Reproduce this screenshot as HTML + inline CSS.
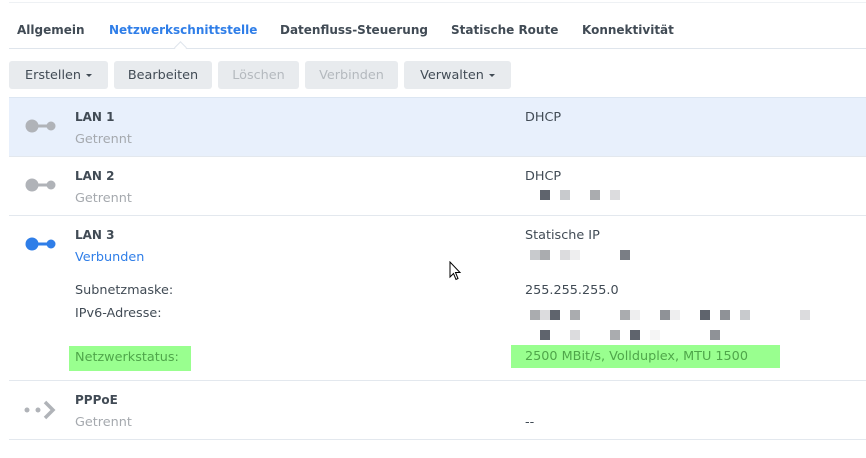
<!DOCTYPE html>
<html><head><style>
body{margin:0;width:866px;height:458px;background:#fff;position:relative;overflow:hidden;font-family:"DejaVu Sans","Liberation Sans",sans-serif;font-size:12.8px;color:#414b55}
.a{position:absolute;white-space:nowrap;margin-top:1px}
.b{font-weight:bold;font-size:12px}
.t{position:absolute;top:23px;font-weight:bold;font-size:12px;color:#414b55}
.btn{position:absolute;top:61px;height:28px;line-height:29px;background:#e8ebee;border-radius:3px;text-align:center;font-size:12.8px;color:#414b55}
.dis{color:#b4b9be}
.hl{position:absolute;left:9px;right:0;border-top:1px solid #e3e8ee}
.g{color:#a5a9ae}
.s{position:absolute;width:10px;height:10px}
.car{display:inline-block;border-left:3px solid transparent;border-right:3px solid transparent;border-top:3px solid #414b55;vertical-align:middle;margin-left:5px}
svg.a,.s,.box{margin-top:0}
</style></head><body>
<div class="hl" style="top:2px;border-color:#eef1f4"></div>
<div class="t" style="left:17px">Allgemein</div>
<div class="t" style="left:109px;color:#2f7ee8">Netzwerkschnittstelle</div>
<div class="t" style="left:280px">Datenfluss-Steuerung</div>
<div class="t" style="left:451px">Statische Route</div>
<div class="t" style="left:582px">Konnektivität</div>
<div class="hl" style="top:48px;border-color:#dfe5ec"></div>
<div class="a box" style="left:176px;top:43px;width:8px;height:8px;background:#fff;border-left:1px solid #dfe5ec;border-top:1px solid #dfe5ec;transform:rotate(45deg)"></div>
<div class="btn" style="left:9px;width:99px">Erstellen<span class="car"></span></div>
<div class="btn" style="left:114px;width:98px">Bearbeiten</div>
<div class="btn dis" style="left:218px;width:81px">Löschen</div>
<div class="btn dis" style="left:305px;width:93px">Verbinden</div>
<div class="btn" style="left:404px;width:107px">Verwalten<span class="car"></span></div>

<div class="a box" style="left:9px;right:0;top:97px;height:59px;background:#e8f0fc;border-top:1px solid #dce6f2"></div>
<div class="hl" style="top:156px"></div>
<div class="hl" style="top:215px"></div>
<div class="hl" style="top:380px"></div>
<div class="hl" style="top:439px"></div>

<svg class="a" style="left:24px;top:118px" width="34" height="16"><circle cx="8" cy="8" r="6.5" fill="#b0b3b8"/><rect x="10" y="6.5" width="16" height="3" fill="#b0b3b8"/><circle cx="27" cy="8" r="4.5" fill="#b0b3b8"/></svg>
<svg class="a" style="left:24px;top:177px" width="34" height="16"><circle cx="8" cy="8" r="6.5" fill="#b0b3b8"/><rect x="10" y="6.5" width="16" height="3" fill="#b0b3b8"/><circle cx="27" cy="8" r="4.5" fill="#b0b3b8"/></svg>
<svg class="a" style="left:24px;top:236px" width="34" height="16"><circle cx="8" cy="8" r="6.5" fill="#2f7ee8"/><rect x="10" y="6.5" width="16" height="3" fill="#2f7ee8"/><circle cx="27" cy="8" r="4.5" fill="#2f7ee8"/></svg>
<svg class="a" style="left:24px;top:398px" width="34" height="24"><circle cx="3" cy="12" r="2.5" fill="#b0b3b8"/><circle cx="14" cy="12" r="2.5" fill="#b0b3b8"/><path d="M21 4 L29 12 L21 20" stroke="#b0b3b8" stroke-width="3.5" fill="none"/></svg>

<div class="a b" style="left:75px;top:109px">LAN 1</div>
<div class="a g" style="left:75px;top:131px">Getrennt</div>
<div class="a" style="left:525px;top:109px">DHCP</div>
<div class="a b" style="left:75px;top:168px">LAN 2</div>
<div class="a g" style="left:75px;top:190px">Getrennt</div>
<div class="a" style="left:525px;top:168px">DHCP</div>
<div class="a b" style="left:75px;top:227px">LAN 3</div>
<div class="a" style="left:75px;top:249px;color:#2f7ee8">Verbunden</div>
<div class="a" style="left:525px;top:227px">Statische IP</div>
<div class="a" style="left:75px;top:282px">Subnetzmaske:</div>
<div class="a" style="left:525px;top:282px">255.255.255.0</div>
<div class="a" style="left:75px;top:305px">IPv6-Adresse:</div>
<div class="a box" style="left:69px;top:346px;width:122px;height:25px;background:#99ff8f"></div>
<div class="a" style="left:75px;top:349px;color:#4fa64a">Netzwerkstatus:</div>
<div class="a box" style="left:511px;top:345px;width:269px;height:23px;background:#99ff8f"></div>
<div class="a" style="left:525px;top:348px;color:#4fa64a">2500 MBit/s, Vollduplex, MTU 1500</div>
<div class="a b" style="left:75px;top:392px">PPPoE</div>
<div class="a g" style="left:75px;top:414px">Getrennt</div>
<div class="a" style="left:525px;top:414px">--</div>

<div class="s" style="left:540px;top:190px;background:#5f646d"></div>
<div class="s" style="left:560px;top:190px;background:#c8cacd"></div>
<div class="s" style="left:590px;top:190px;background:#aaacaf"></div>
<div class="s" style="left:610px;top:190px;background:#dcdcde"></div>
<div class="s" style="left:530px;top:250px;background:#c8cacd"></div>
<div class="s" style="left:540px;top:250px;background:#aaacaf"></div>
<div class="s" style="left:560px;top:250px;background:#dcdcde"></div>
<div class="s" style="left:570px;top:250px;background:#eeeeef"></div>
<div class="s" style="left:620px;top:250px;background:#7a7e85"></div>
<div class="s" style="left:530px;top:310px;background:#aaacaf"></div>
<div class="s" style="left:540px;top:310px;background:#dcdcde"></div>
<div class="s" style="left:550px;top:310px;background:#5f646d"></div>
<div class="s" style="left:570px;top:310px;background:#aaacaf"></div>
<div class="s" style="left:620px;top:310px;background:#aaacaf"></div>
<div class="s" style="left:630px;top:310px;background:#eeeeef"></div>
<div class="s" style="left:660px;top:310px;background:#8f9297"></div>
<div class="s" style="left:670px;top:310px;background:#eeeeef"></div>
<div class="s" style="left:700px;top:310px;background:#5f646d"></div>
<div class="s" style="left:720px;top:310px;background:#8f9297"></div>
<div class="s" style="left:740px;top:310px;background:#c8cacd"></div>
<div class="s" style="left:800px;top:310px;background:#dcdcde"></div>
<div class="s" style="left:540px;top:330px;background:#5f646d"></div>
<div class="s" style="left:570px;top:330px;background:#dcdcde"></div>
<div class="s" style="left:610px;top:330px;background:#aaacaf"></div>
<div class="s" style="left:630px;top:330px;background:#5f646d"></div>
<div class="s" style="left:650px;top:330px;background:#f5f5f5"></div>
<div class="s" style="left:710px;top:330px;background:#8f9297"></div>

<svg class="a" style="left:449px;top:261px" width="14" height="22"><path d="M1 1 L1 16 L4.5 12.5 L7 18.5 L9 17.5 L6.5 11.5 L11 11.5 Z" fill="#fff" stroke="#000" stroke-width="1"/></svg>
</body></html>
